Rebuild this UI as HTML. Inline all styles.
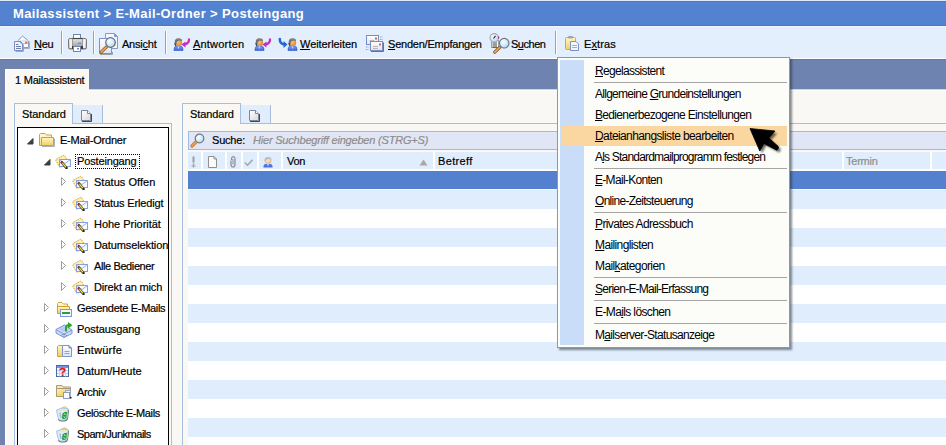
<!DOCTYPE html>
<html><head><meta charset="utf-8"><style>
*{margin:0;padding:0;box-sizing:border-box}
html,body{width:946px;height:445px;overflow:hidden;background:#F9F8F4;font-family:"Liberation Sans",sans-serif;font-size:11px;color:#000;position:relative}
.a{position:absolute}
.t{position:absolute;font-size:11px;line-height:13px;white-space:nowrap;-webkit-text-stroke:0.2px currentColor}
u{text-decoration:underline;text-underline-offset:1px;text-decoration-thickness:1px}
.sep{position:absolute;top:31px;width:2px;height:23px;border-left:1px solid #9EA3AA;border-right:1px solid #FFFFFF}
.ptab{position:absolute;background:#F9F8F4;border:1px solid #A7BEDF;border-bottom:none}
.dtab{position:absolute;background:#E1EDFC;border-right:1px solid #A7BEDF}
.bl{position:absolute;background:#A7BEDF}
.row{position:absolute;left:188px;width:758px;height:19px}
.hs{position:absolute;top:152px;width:2px;height:17px;background:#FFFFFF}
.mi{position:absolute;left:38px;font-size:11px;line-height:13px;white-space:nowrap;letter-spacing:-0.25px}
</style></head><body>
<svg width="0" height="0" style="position:absolute"><defs>
<linearGradient id="gy" x1="0" y1="0" x2="0" y2="1"><stop offset="0" stop-color="#FFF6C4"/><stop offset="1" stop-color="#F2CF5E"/></linearGradient>
<linearGradient id="gy2" x1="0" y1="0" x2="0" y2="1"><stop offset="0" stop-color="#FFF9D8"/><stop offset="1" stop-color="#F8E08A"/></linearGradient>
<linearGradient id="gb" x1="0" y1="0" x2="0" y2="1"><stop offset="0" stop-color="#FFFFFF"/><stop offset="1" stop-color="#D9E5F8"/></linearGradient>
<linearGradient id="gdoc" x1="0" y1="0" x2="1" y2="1"><stop offset="0" stop-color="#FFFFFF"/><stop offset="1" stop-color="#D8D8DE"/></linearGradient>
<radialGradient id="glens" cx="0.4" cy="0.35" r="0.7"><stop offset="0" stop-color="#FFFFFF"/><stop offset="1" stop-color="#A9D8F5"/></radialGradient>
<radialGradient id="gface" cx="0.4" cy="0.4" r="0.7"><stop offset="0" stop-color="#F9C27A"/><stop offset="1" stop-color="#D9822B"/></radialGradient>
<radialGradient id="gface2" cx="0.4" cy="0.4" r="0.7"><stop offset="0" stop-color="#FBE6CC"/><stop offset="1" stop-color="#E2B991"/></radialGradient>
<linearGradient id="gbody" x1="0" y1="0" x2="0" y2="1"><stop offset="0" stop-color="#7FA2F2"/><stop offset="1" stop-color="#3C63D8"/></linearGradient>
<linearGradient id="gprint" x1="0" y1="0" x2="0" y2="1"><stop offset="0" stop-color="#E8E6E6"/><stop offset="0.5" stop-color="#BDB9BA"/><stop offset="1" stop-color="#8D898A"/></linearGradient>
</defs></svg>
<div class="a" style="left:0px;top:0px;width:946px;height:26px;background:#5382D1;border-bottom:1px solid #4B78C6;border-top:1px solid #DCEAFC;box-shadow:inset 0 1px 0 #4B79CA"></div>
<div class="a" style="left:13px;top:6px;font-weight:bold;font-size:13px;line-height:16px;color:#fff;letter-spacing:0.37px;white-space:nowrap">Mailassistent &gt; E-Mail-Ordner &gt; Posteingang</div>
<div class="a" style="left:0px;top:26px;width:946px;height:32px;background:#E3EFFD;border-top:1px solid #EDF6FF"></div>
<div class="a" style="left:0px;top:58px;width:946px;height:1px;background:#FFFFFF"></div>
<div class="sep" style="left:61px"></div>
<div class="sep" style="left:93px"></div>
<div class="sep" style="left:165px"></div>
<div class="sep" style="left:555px"></div>
<svg class="a" style="left:13px;top:35px" width="18" height="18" viewBox="0 0 18 18" ><path d="M4.5 6L9.6 1L15.5 6V12.5H4.5Z" fill="#F7F9FD" stroke="#8A9ACB"/><path d="M16.5 6.5V13.5H6" fill="none" stroke="#A9AFC2"/><path d="M4.5 6H15.5" stroke="#C9D2EA"/><rect x="12" y="6.5" width="2.5" height="2.5" fill="#F27A3A"/><path d="M10 8.5H12" stroke="#B7BED0"/><path d="M1.5 6.5H7.5L9.5 8.5V15.5H1.5Z" fill="#EEF2FB" stroke="#7E8EC0"/><path d="M2.5 16.5H10.5V9.5" fill="none" stroke="#A0A6BA"/><path d="M3 9.5H5.5M3 11.5H8M3 13.5H8" stroke="#6F7FB6"/><path d="M7 6.5L9 8.5" stroke="#4C9BE6" stroke-width="1.3"/></svg>
<div class="t" style="left:34px;top:38px;letter-spacing:-0.250px;"><u>N</u>eu</div>
<svg class="a" style="left:68px;top:34px" width="19" height="18" viewBox="0 0 19 18" ><rect x="5.5" y="0.5" width="7" height="5" fill="#FFFFFF" stroke="#6F86AA"/><rect x="0.5" y="4.5" width="18" height="10.5" rx="1.5" fill="url(#gprint)" stroke="#807C7D"/><rect x="1.5" y="5.5" width="3" height="8.5" fill="#F4F3F3"/><rect x="14.5" y="5.5" width="3" height="8.5" fill="#F4F3F3"/><path d="M4.5 4.5H14.5" stroke="#4A4748" stroke-width="1.2"/><path d="M4.5 5V14M14.5 5V14" stroke="#8F8B8C" stroke-width="0.8"/><rect x="10" y="8.6" width="3.2" height="1.4" fill="#4AA3F2"/><rect x="4" y="12" width="11" height="3" fill="#3E3A3B"/><rect x="5.5" y="12.5" width="7" height="5" fill="#FFFFFF" stroke="#6F86AA"/><rect x="9.3" y="14" width="1.5" height="1.5" fill="#3060D0"/></svg>
<svg class="a" style="left:99px;top:33px" width="20" height="22" viewBox="0 0 20 22" ><path d="M6.5 0.5H15.5L18.5 3.5V15.5H6.5Z" fill="#F3F6FD" stroke="#8796CB"/><path d="M15.5 0.5V3.5H18.5" fill="#5AA9EE" stroke="#8796CB"/><path d="M0.5 5.5H12.5V20.5H0.5Z" fill="url(#gb)" stroke="#7E8FC6"/><path d="M1 21.5H13.5V19" fill="none" stroke="#A0A0A0"/><path d="M2.2 19.2L7.2 14.2" stroke="#8B5A2B" stroke-width="3.2" stroke-linecap="round"/><path d="M2.2 19.2L7.2 14.2" stroke="#F2A54C" stroke-width="1.7" stroke-linecap="round"/><circle cx="11.5" cy="9.5" r="4.8" fill="url(#glens)" stroke="#656E78" stroke-width="1.2"/></svg>
<div class="t" style="left:122px;top:38px;letter-spacing:-0.217px;">Ansi<u>c</u>ht</div>
<svg class="a" style="left:173px;top:37px" width="18" height="15" viewBox="0 0 18 15" ><g transform="translate(0.5 0.5) scale(1.0)"><path d="M0.5 13V11.5Q0.5 8.5 4 8.5H6Q9.5 8.5 9.5 11.5V13Z" fill="url(#gbody)" stroke="#2F55C8" stroke-width="0.6"/><path d="M4 8.8L5 12L6 8.8" fill="#BFD6FF"/><circle cx="5.2" cy="5.2" r="3.5" fill="url(#gface)"/><path d="M1.2 5.5Q0.8 0.8 5 0.8Q8.6 0.8 8.6 3.6Q7.2 2.6 4.6 3.2Q3 3.8 2.8 6.8Z" fill="#707070"/><path d="M1.4 5.5Q1.4 7.4 2.6 8.2" fill="none" stroke="#2E2E2E" stroke-width="1.1"/><path d="M3 1.6Q5 0.9 7 1.6" fill="none" stroke="#A8A8A8" stroke-width="0.8"/></g><path d="M16 1.5Q16.5 6.5 11.5 7.5" fill="none" stroke="#C52BC0" stroke-width="2.2"/><path d="M8.5 7.5L12.5 4.5V10.5Z" fill="#C52BC0"/></svg>
<div class="t" style="left:193px;top:38px;letter-spacing:0.200px;"><u>A</u>ntworten</div>
<svg class="a" style="left:254px;top:37px" width="18" height="15" viewBox="0 0 18 15" ><g transform="translate(0.5 0.5) scale(1.0)"><path d="M0.5 13V11.5Q0.5 8.5 4 8.5H6Q9.5 8.5 9.5 11.5V13Z" fill="url(#gbody)" stroke="#2F55C8" stroke-width="0.6"/><path d="M4 8.8L5 12L6 8.8" fill="#BFD6FF"/><circle cx="5.2" cy="5.2" r="3.5" fill="url(#gface)"/><path d="M1.2 5.5Q0.8 0.8 5 0.8Q8.6 0.8 8.6 3.6Q7.2 2.6 4.6 3.2Q3 3.8 2.8 6.8Z" fill="#707070"/><path d="M1.4 5.5Q1.4 7.4 2.6 8.2" fill="none" stroke="#2E2E2E" stroke-width="1.1"/><path d="M3 1.6Q5 0.9 7 1.6" fill="none" stroke="#A8A8A8" stroke-width="0.8"/></g><path d="M16 1.5Q16.5 6.5 11.5 7.5" fill="none" stroke="#C52BC0" stroke-width="2.2"/><path d="M8.5 7.5L12.5 4.5V10.5Z" fill="#C52BC0"/></svg>
<svg class="a" style="left:278px;top:37px" width="20" height="15" viewBox="0 0 20 15" ><path d="M2 1Q1 6 6 7.5" fill="none" stroke="#2167D6" stroke-width="2.4"/><path d="M9.5 7.5L5.5 4V11Z" fill="#2167D6"/><g transform="translate(9.5 0.5) scale(1.0)"><path d="M0.5 13V11.5Q0.5 8.5 4 8.5H6Q9.5 8.5 9.5 11.5V13Z" fill="url(#gbody)" stroke="#2F55C8" stroke-width="0.6"/><path d="M4 8.8L5 12L6 8.8" fill="#BFD6FF"/><circle cx="5.2" cy="5.2" r="3.5" fill="url(#gface)"/><path d="M1.2 5.5Q0.8 0.8 5 0.8Q8.6 0.8 8.6 3.6Q7.2 2.6 4.6 3.2Q3 3.8 2.8 6.8Z" fill="#707070"/><path d="M1.4 5.5Q1.4 7.4 2.6 8.2" fill="none" stroke="#2E2E2E" stroke-width="1.1"/><path d="M3 1.6Q5 0.9 7 1.6" fill="none" stroke="#A8A8A8" stroke-width="0.8"/></g></svg>
<div class="t" style="left:300px;top:38px;letter-spacing:-0.073px;"><u>W</u>eiterleiten</div>
<svg class="a" style="left:366px;top:35px" width="19" height="18" viewBox="0 0 19 18" ><rect x="0.5" y="0.5" width="12" height="9" fill="url(#gb)" stroke="#7B8CC4"/><rect x="9" y="2.5" width="2" height="2" fill="#D86A3A"/><path d="M3.5 5.5H8" stroke="#C4B6A8"/><path d="M14 2H17M14 4.5H17" stroke="#8A9AD0" stroke-dasharray="1.5 1"/><rect x="4.5" y="6.5" width="12" height="9" fill="url(#gb)" stroke="#7B8CC4"/><path d="M5 16.5H17.5V7.5" fill="none" stroke="#6F6F90"/><rect x="13" y="8.5" width="2" height="2" fill="#D86A3A"/><path d="M7 11.5H12M7 13.5H12" stroke="#C4B6A8"/><path d="M0 12H3M0 14.5H3" stroke="#8A9AD0" stroke-dasharray="1.5 1"/></svg>
<div class="t" style="left:388px;top:38px;letter-spacing:-0.220px;"><u>S</u>enden/Empfangen</div>
<svg class="a" style="left:489px;top:33px" width="21" height="21" viewBox="0 0 21 21" ><rect x="2.5" y="7.5" width="7" height="7" fill="#FFFFFF" stroke="#A0A0A0"/><path d="M3.5 10H8M3.5 12H8M3.5 14H8" stroke="#222" stroke-width="0.9"/><circle cx="5.2" cy="4.8" r="4.2" fill="url(#glens)" stroke="#A8A8A8" stroke-width="1.1"/><path d="M6.5 2.8L4.5 5.5" fill="none" stroke="#222" stroke-width="1.1"/><rect x="9" y="3.5" width="1.2" height="2" fill="#C0198F"/><path d="M5.8 19.2L10.5 14.5" stroke="#8B5A2B" stroke-width="3.2" stroke-linecap="round"/><path d="M5.8 19.2L10.5 14.5" stroke="#F2A54C" stroke-width="1.7" stroke-linecap="round"/><circle cx="15.2" cy="10.2" r="4.8" fill="url(#glens)" stroke="#6F7780" stroke-width="1.2"/></svg>
<div class="t" style="left:511px;top:38px;letter-spacing:-0.480px;">S<u>u</u>chen</div>
<svg class="a" style="left:565px;top:36px" width="14" height="15" viewBox="0 0 14 15" ><rect x="0.5" y="1.5" width="10" height="12" rx="1" fill="url(#gy)" stroke="#D9A82C"/><rect x="3" y="0" width="5" height="2.5" rx="1" fill="#9DA3B8"/><path d="M5.5 5.5H11L13.5 8V14.5H5.5Z" fill="#F2F6FD" stroke="#7E8EC8"/><path d="M7 9.5H12M7 11.5H12" stroke="#8FB1E6"/></svg>
<div class="t" style="left:584px;top:38px;letter-spacing:0.120px;">E<u>x</u>tras</div>
<div class="a" style="left:0px;top:59px;width:946px;height:31px;background:#6E83AF;border-top:1px solid #6378A8"></div>
<div class="a" style="left:0px;top:89px;width:5px;height:356px;background:#6E83AF"></div>
<div class="a" style="left:5px;top:89px;width:941px;height:356px;background:#F9F8F4;border-top:1px solid #C9D5E6;box-shadow:inset 1px 1px 0 #fff"></div>
<div class="a" style="left:5px;top:69px;width:84px;height:22px;background:#F9F8F4;border-top:1px solid #fff;border-left:1px solid #fff"></div>
<div class="t" style="left:15px;top:74px;letter-spacing:-0.221px;">1 Mailassistent</div>
<div class="ptab" style="left:14px;top:103px;width:59px;height:21px"></div>
<div class="dtab" style="left:73px;top:105px;width:30px;height:18px"></div>
<svg class="a" style="left:80px;top:109px" width="12" height="13" viewBox="0 0 12 13" ><path d="M1.5 1.5H7.5L10.5 4.5V11.5H1.5Z" fill="url(#gdoc)" stroke="#7F8797"/><path d="M2 12.5H11.5V5" fill="none" stroke="#3F4656" stroke-width="1"/><path d="M7.5 1.5V4.5H10.5" fill="#FFFFFF" stroke="#7F8797"/></svg>
<div class="a" style="left:73px;top:123px;width:99px;height:1px;background:#A7BEDF"></div>
<div class="a" style="left:14px;top:123px;width:1px;height:322px;background:#A7BEDF"></div>
<div class="a" style="left:171px;top:123px;width:1px;height:322px;background:#A7BEDF"></div>
<div class="t" style="left:22px;top:108px;letter-spacing:-0.100px;">Standard</div>
<div class="a" style="left:17px;top:127px;width:152px;height:330px;background:#fff;border:1px solid #000"></div>
<svg class="a" style="left:27px;top:138px" width="7" height="7" viewBox="0 0 7 7" ><path d="M6 0.5V6H0.5Z" fill="#3C3C3C" stroke="#3C3C3C" stroke-linejoin="round"/></svg>
<svg class="a" style="left:38px;top:132px" width="17" height="16" viewBox="0 0 17 16" ><path d="M1.5 13.5V2.5L2.5 1.5H7L8.5 3H13.5V13.5Z" fill="url(#gy2)" stroke="#CFA13A"/><path d="M4 14.5H16.5V6.5" fill="none" stroke="#A9B0BE" stroke-width="1"/><path d="M3.5 5.5H15.5V13.5H3.5Z" fill="url(#gy)" stroke="#CFA13A"/></svg>
<div class="t" style="left:60px;top:134px;letter-spacing:-0.225px;">E-Mail-Ordner</div>
<svg class="a" style="left:44px;top:159px" width="7" height="7" viewBox="0 0 7 7" ><path d="M6 0.5V6H0.5Z" fill="#3C3C3C" stroke="#3C3C3C" stroke-linejoin="round"/></svg>
<svg class="a" style="left:54px;top:152px" width="18" height="17" viewBox="0 0 18 17" ><g transform="rotate(-30 8.5 9)"><rect x="3" y="4.5" width="10" height="9" rx="1" fill="#FCF0B8" stroke="#DDAE4A" stroke-dasharray="1.6 0.8"/></g><rect x="5.5" y="7.5" width="11" height="7" fill="#F7FAFF" stroke="#86A0DA"/><path d="M5.5 7.5L11 11.5L16.5 7.5" fill="none" stroke="#9FB3E2"/><path d="M7.8 10.5L12.5 16" stroke="#262626" stroke-width="2.6" stroke-linecap="round"/><path d="M7.8 10.5L12 15.2" stroke="#F2DA2C" stroke-width="1.3"/><path d="M7.4 10L8.4 11.2" stroke="#C8282A" stroke-width="1.6"/></svg>
<div class="a" style="left:75px;top:154px;width:65px;height:15px;border:1px dotted #000"></div>
<div class="t" style="left:77px;top:155px;letter-spacing:-0.150px;">Posteingang</div>
<svg class="a" style="left:61px;top:177px" width="6" height="9" viewBox="0 0 6 9" ><path d="M0.5 0.5L4.5 4.5L0.5 8.5Z" fill="#FFFFFF" stroke="#9E9E9E"/></svg>
<svg class="a" style="left:71px;top:173px" width="18" height="17" viewBox="0 0 18 17" ><g transform="rotate(-30 8.5 9)"><rect x="3" y="4.5" width="10" height="9" rx="1" fill="#FCF0B8" stroke="#DDAE4A" stroke-dasharray="1.6 0.8"/></g><rect x="5.5" y="7.5" width="11" height="7" fill="#F7FAFF" stroke="#86A0DA"/><path d="M5.5 7.5L11 11.5L16.5 7.5" fill="none" stroke="#9FB3E2"/><path d="M7.8 10.5L12.5 16" stroke="#262626" stroke-width="2.6" stroke-linecap="round"/><path d="M7.8 10.5L12 15.2" stroke="#F2DA2C" stroke-width="1.3"/><path d="M7.4 10L8.4 11.2" stroke="#C8282A" stroke-width="1.6"/></svg>
<div class="t" style="left:94px;top:176px;letter-spacing:0.027px;">Status Offen</div>
<svg class="a" style="left:61px;top:198px" width="6" height="9" viewBox="0 0 6 9" ><path d="M0.5 0.5L4.5 4.5L0.5 8.5Z" fill="#FFFFFF" stroke="#9E9E9E"/></svg>
<svg class="a" style="left:71px;top:194px" width="18" height="17" viewBox="0 0 18 17" ><g transform="rotate(-30 8.5 9)"><rect x="3" y="4.5" width="10" height="9" rx="1" fill="#FCF0B8" stroke="#DDAE4A" stroke-dasharray="1.6 0.8"/></g><rect x="5.5" y="7.5" width="11" height="7" fill="#F7FAFF" stroke="#86A0DA"/><path d="M5.5 7.5L11 11.5L16.5 7.5" fill="none" stroke="#9FB3E2"/><path d="M7.8 10.5L12.5 16" stroke="#262626" stroke-width="2.6" stroke-linecap="round"/><path d="M7.8 10.5L12 15.2" stroke="#F2DA2C" stroke-width="1.3"/><path d="M7.4 10L8.4 11.2" stroke="#C8282A" stroke-width="1.6"/></svg>
<div class="t" style="left:94px;top:197px;letter-spacing:-0.143px;">Status Erledigt</div>
<svg class="a" style="left:61px;top:219px" width="6" height="9" viewBox="0 0 6 9" ><path d="M0.5 0.5L4.5 4.5L0.5 8.5Z" fill="#FFFFFF" stroke="#9E9E9E"/></svg>
<svg class="a" style="left:71px;top:215px" width="18" height="17" viewBox="0 0 18 17" ><g transform="rotate(-30 8.5 9)"><rect x="3" y="4.5" width="10" height="9" rx="1" fill="#FCF0B8" stroke="#DDAE4A" stroke-dasharray="1.6 0.8"/></g><rect x="5.5" y="7.5" width="11" height="7" fill="#F7FAFF" stroke="#86A0DA"/><path d="M5.5 7.5L11 11.5L16.5 7.5" fill="none" stroke="#9FB3E2"/><path d="M7.8 10.5L12.5 16" stroke="#262626" stroke-width="2.6" stroke-linecap="round"/><path d="M7.8 10.5L12 15.2" stroke="#F2DA2C" stroke-width="1.3"/><path d="M7.4 10L8.4 11.2" stroke="#C8282A" stroke-width="1.6"/></svg>
<div class="t" style="left:94px;top:218px;letter-spacing:-0.031px;">Hohe Priorität</div>
<svg class="a" style="left:61px;top:240px" width="6" height="9" viewBox="0 0 6 9" ><path d="M0.5 0.5L4.5 4.5L0.5 8.5Z" fill="#FFFFFF" stroke="#9E9E9E"/></svg>
<svg class="a" style="left:71px;top:236px" width="18" height="17" viewBox="0 0 18 17" ><g transform="rotate(-30 8.5 9)"><rect x="3" y="4.5" width="10" height="9" rx="1" fill="#FCF0B8" stroke="#DDAE4A" stroke-dasharray="1.6 0.8"/></g><rect x="5.5" y="7.5" width="11" height="7" fill="#F7FAFF" stroke="#86A0DA"/><path d="M5.5 7.5L11 11.5L16.5 7.5" fill="none" stroke="#9FB3E2"/><path d="M7.8 10.5L12.5 16" stroke="#262626" stroke-width="2.6" stroke-linecap="round"/><path d="M7.8 10.5L12 15.2" stroke="#F2DA2C" stroke-width="1.3"/><path d="M7.4 10L8.4 11.2" stroke="#C8282A" stroke-width="1.6"/></svg>
<div class="t" style="left:94px;top:239px;letter-spacing:-0.115px;">Datumselektion</div>
<svg class="a" style="left:61px;top:261px" width="6" height="9" viewBox="0 0 6 9" ><path d="M0.5 0.5L4.5 4.5L0.5 8.5Z" fill="#FFFFFF" stroke="#9E9E9E"/></svg>
<svg class="a" style="left:71px;top:257px" width="18" height="17" viewBox="0 0 18 17" ><g transform="rotate(-30 8.5 9)"><rect x="3" y="4.5" width="10" height="9" rx="1" fill="#FCF0B8" stroke="#DDAE4A" stroke-dasharray="1.6 0.8"/></g><rect x="5.5" y="7.5" width="11" height="7" fill="#F7FAFF" stroke="#86A0DA"/><path d="M5.5 7.5L11 11.5L16.5 7.5" fill="none" stroke="#9FB3E2"/><path d="M7.8 10.5L12.5 16" stroke="#262626" stroke-width="2.6" stroke-linecap="round"/><path d="M7.8 10.5L12 15.2" stroke="#F2DA2C" stroke-width="1.3"/><path d="M7.4 10L8.4 11.2" stroke="#C8282A" stroke-width="1.6"/></svg>
<div class="t" style="left:94px;top:260px;letter-spacing:-0.392px;">Alle Bediener</div>
<svg class="a" style="left:61px;top:282px" width="6" height="9" viewBox="0 0 6 9" ><path d="M0.5 0.5L4.5 4.5L0.5 8.5Z" fill="#FFFFFF" stroke="#9E9E9E"/></svg>
<svg class="a" style="left:71px;top:278px" width="18" height="17" viewBox="0 0 18 17" ><g transform="rotate(-30 8.5 9)"><rect x="3" y="4.5" width="10" height="9" rx="1" fill="#FCF0B8" stroke="#DDAE4A" stroke-dasharray="1.6 0.8"/></g><rect x="5.5" y="7.5" width="11" height="7" fill="#F7FAFF" stroke="#86A0DA"/><path d="M5.5 7.5L11 11.5L16.5 7.5" fill="none" stroke="#9FB3E2"/><path d="M7.8 10.5L12.5 16" stroke="#262626" stroke-width="2.6" stroke-linecap="round"/><path d="M7.8 10.5L12 15.2" stroke="#F2DA2C" stroke-width="1.3"/><path d="M7.4 10L8.4 11.2" stroke="#C8282A" stroke-width="1.6"/></svg>
<div class="t" style="left:94px;top:281px;letter-spacing:-0.154px;">Direkt an mich</div>
<svg class="a" style="left:44px;top:303px" width="6" height="9" viewBox="0 0 6 9" ><path d="M0.5 0.5L4.5 4.5L0.5 8.5Z" fill="#FFFFFF" stroke="#9E9E9E"/></svg>
<svg class="a" style="left:55px;top:301px" width="18" height="17" viewBox="0 0 18 17" ><path d="M2.5 12.5V2.5L3.5 1.5H7L8.5 3H12.5V12.5Z" fill="url(#gy2)" stroke="#CFA13A"/><path d="M2.5 12.5V5.5H14.5V12.5Z" fill="url(#gy)" stroke="#CFA13A"/><rect x="5.5" y="8.5" width="11" height="7" fill="#F4F7FD" stroke="#7D96D6"/><rect x="7" y="11" width="8" height="2" fill="#2F9B3A"/></svg>
<div class="t" style="left:77px;top:302px;letter-spacing:-0.312px;">Gesendete E-Mails</div>
<svg class="a" style="left:44px;top:324px" width="6" height="9" viewBox="0 0 6 9" ><path d="M0.5 0.5L4.5 4.5L0.5 8.5Z" fill="#FFFFFF" stroke="#9E9E9E"/></svg>
<svg class="a" style="left:55px;top:321px" width="18" height="18" viewBox="0 0 18 18" ><path d="M1 8.5L9.5 4L17 9V12.5L9 16.5L1 12Z" fill="#C9DCFA" stroke="#7A90D8"/><path d="M1 8.5L9 13L17 9" fill="#E6F0FE" stroke="#7A90D8"/><path d="M3.5 8.5L9.5 5.5L14.5 9L9 11.5Z" fill="#B5CCF4"/><path d="M9 13V16.5M6 14.5L9 13L12 14.8" stroke="#7A90D8" fill="#FFFFFF"/><path d="M11 10.5V6.5Q11 4.2 13.5 4.2" fill="none" stroke="#2BA52F" stroke-width="1.9"/><path d="M13 1L17.5 4.2L13 7.4Z" fill="#2BA52F"/></svg>
<div class="t" style="left:77px;top:323px;letter-spacing:-0.080px;">Postausgang</div>
<svg class="a" style="left:44px;top:345px" width="6" height="9" viewBox="0 0 6 9" ><path d="M0.5 0.5L4.5 4.5L0.5 8.5Z" fill="#FFFFFF" stroke="#9E9E9E"/></svg>
<svg class="a" style="left:55px;top:343px" width="18" height="16" viewBox="0 0 18 16" ><path d="M2.5 13.5V3.5L3.5 2.5H7.5V13.5Z" fill="url(#gy)" stroke="#CFA13A"/><path d="M7.5 2.5H14L16.5 5V13.5H7.5Z" fill="url(#gb)" stroke="#8094C8"/><path d="M14 2.5V5H16.5" fill="#4FA3E8" stroke="#8094C8"/><path d="M9.5 8.5H14.5M9.5 10.5H14.5" stroke="#9AA3B5"/></svg>
<div class="t" style="left:77px;top:344px;letter-spacing:0.200px;">Entwürfe</div>
<svg class="a" style="left:44px;top:366px" width="6" height="9" viewBox="0 0 6 9" ><path d="M0.5 0.5L4.5 4.5L0.5 8.5Z" fill="#FFFFFF" stroke="#9E9E9E"/></svg>
<svg class="a" style="left:55px;top:364px" width="15" height="14" viewBox="0 0 15 14" ><rect x="1.5" y="1.5" width="12" height="11" fill="#F2F6FD" stroke="#4A6AA5"/><rect x="2" y="2" width="11" height="2" fill="#6C98E6"/><path d="M2 6.5H13M2 9.5H13M4.5 4V12.5M10.5 4V12.5" stroke="#C3D3EE"/><path d="M5.3 6.3Q5.3 4.6 7.5 4.6Q9.7 4.6 9.7 6.2Q9.7 7.6 7.6 8.3V9.6" fill="none" stroke="#E41B1B" stroke-width="1.7"/><rect x="6.7" y="10.3" width="1.8" height="1.7" fill="#E41B1B"/></svg>
<div class="t" style="left:77px;top:365px;letter-spacing:-0.020px;">Datum/Heute</div>
<svg class="a" style="left:44px;top:387px" width="6" height="9" viewBox="0 0 6 9" ><path d="M0.5 0.5L4.5 4.5L0.5 8.5Z" fill="#FFFFFF" stroke="#9E9E9E"/></svg>
<svg class="a" style="left:55px;top:384px" width="17" height="16" viewBox="0 0 17 16" ><linearGradient id="gar" x1="0" y1="0" x2="1" y2="1"><stop offset="0" stop-color="#FFF4C0"/><stop offset="1" stop-color="#EEB83A"/></linearGradient><path d="M1.5 12.5V1.5H7L8 3H15.5V12.5Z" fill="#FBE9A8" stroke="#A99A72"/><path d="M1.5 12.5V4.5H15.5V12.5Z" fill="url(#gar)" stroke="#A99A72"/><rect x="10.5" y="6.5" width="5" height="6" fill="#EEF2FA" stroke="#9CA8C2"/><rect x="8.5" y="8.5" width="6" height="6" fill="#F8FAFE" stroke="#8E9AB8"/><rect x="15" y="13" width="1.5" height="1.5" fill="#1A1A1A"/></svg>
<div class="t" style="left:77px;top:386px;letter-spacing:-0.320px;">Archiv</div>
<svg class="a" style="left:44px;top:408px" width="6" height="9" viewBox="0 0 6 9" ><path d="M0.5 0.5L4.5 4.5L0.5 8.5Z" fill="#FFFFFF" stroke="#9E9E9E"/></svg>
<svg class="a" style="left:55px;top:405px" width="15" height="17" viewBox="0 0 15 17" ><path d="M6 3.5L9.5 1.5L12 3" fill="#F6DE9A" stroke="#E8C46A" stroke-width="1"/><path d="M13.5 4.5L12.5 13.5Q12 15.5 9.5 15.8L6 15.8Q4 15.5 3.5 14" fill="none" stroke="#6E6E6E" stroke-width="1.2"/><path d="M1.5 5Q7 2 13 3.5L12 13Q11.5 15 9 15L5.5 15Q3.5 14.5 3 12.5Z" fill="#DDEFFC" stroke="#9CC6EC"/><path d="M3 6Q7 4.5 12 5" fill="none" stroke="#F3E3A8" stroke-width="1.2"/><path d="M5 7.5L6 13" stroke="#B8AEE6" stroke-width="1.5"/><path d="M7.5 8.5Q10 6 12 7L11.3 13Q9 14.5 7 13.5Z" fill="#14A22B"/><path d="M8.8 9.5Q9.8 8.6 10.6 9.3M8.6 11.8Q9.5 12.6 10.4 11.9" fill="none" stroke="#FFFFFF" stroke-width="1"/></svg>
<div class="t" style="left:77px;top:407px;letter-spacing:-0.375px;">Gelöschte E-Mails</div>
<svg class="a" style="left:44px;top:429px" width="6" height="9" viewBox="0 0 6 9" ><path d="M0.5 0.5L4.5 4.5L0.5 8.5Z" fill="#FFFFFF" stroke="#9E9E9E"/></svg>
<svg class="a" style="left:55px;top:426px" width="15" height="17" viewBox="0 0 15 17" ><path d="M6 3.5L9.5 1.5L12 3" fill="#F6DE9A" stroke="#E8C46A" stroke-width="1"/><path d="M13.5 4.5L12.5 13.5Q12 15.5 9.5 15.8L6 15.8Q4 15.5 3.5 14" fill="none" stroke="#6E6E6E" stroke-width="1.2"/><path d="M1.5 5Q7 2 13 3.5L12 13Q11.5 15 9 15L5.5 15Q3.5 14.5 3 12.5Z" fill="#DDEFFC" stroke="#9CC6EC"/><path d="M3 6Q7 4.5 12 5" fill="none" stroke="#F3E3A8" stroke-width="1.2"/><path d="M5 7.5L6 13" stroke="#B8AEE6" stroke-width="1.5"/><path d="M7.5 8.5Q10 6 12 7L11.3 13Q9 14.5 7 13.5Z" fill="#14A22B"/><path d="M8.8 9.5Q9.8 8.6 10.6 9.3M8.6 11.8Q9.5 12.6 10.4 11.9" fill="none" stroke="#FFFFFF" stroke-width="1"/></svg>
<div class="t" style="left:77px;top:428px;letter-spacing:-0.492px;">Spam/Junkmails</div>
<div class="ptab" style="left:182px;top:103px;width:59px;height:21px"></div>
<div class="dtab" style="left:241px;top:105px;width:30px;height:18px"></div>
<svg class="a" style="left:248px;top:109px" width="12" height="13" viewBox="0 0 12 13" ><path d="M1.5 1.5H7.5L10.5 4.5V11.5H1.5Z" fill="url(#gdoc)" stroke="#7F8797"/><path d="M2 12.5H11.5V5" fill="none" stroke="#3F4656" stroke-width="1"/><path d="M7.5 1.5V4.5H10.5" fill="#FFFFFF" stroke="#7F8797"/></svg>
<div class="a" style="left:241px;top:123px;width:705px;height:1px;background:#A7BEDF"></div>
<div class="a" style="left:182px;top:123px;width:1px;height:322px;background:#A7BEDF"></div>
<div class="t" style="left:190px;top:108px;letter-spacing:-0.100px;">Standard</div>
<div class="a" style="left:188px;top:131px;width:758px;height:19px;background:#E0E6F6;border:1px solid #9DBAE6;border-right:none"></div>
<svg class="a" style="left:190px;top:133px" width="15" height="15" viewBox="0 0 15 15" ><path d="M2 13L6.5 8.5" stroke="#C9782A" stroke-width="3.2" stroke-linecap="round"/><path d="M2 13L6.5 8.5" stroke="#F4A64E" stroke-width="1.6" stroke-linecap="round"/><circle cx="9.5" cy="5.5" r="4.3" fill="url(#glens)" stroke="#6E7A86" stroke-width="1.2"/></svg>
<div class="t" style="left:212px;top:134px;letter-spacing:-0.200px;">Suche:</div>
<div class="t" style="left:253px;top:134px;letter-spacing:-0.200px;color:#8F8C8A;font-style:italic">Hier Suchbegriff eingeben (STRG+S)</div>
<div class="a" style="left:188px;top:152px;width:758px;height:17px;background:#E0EDFC"></div>
<div class="a" style="left:188px;top:169px;width:758px;height:2px;background:#FFFFFF"></div>
<div class="hs" style="left:201px"></div>
<div class="hs" style="left:225px"></div>
<div class="hs" style="left:241px"></div>
<div class="hs" style="left:257px"></div>
<div class="hs" style="left:281px"></div>
<div class="hs" style="left:433px"></div>
<div class="hs" style="left:842px"></div>
<div class="hs" style="left:930px"></div>
<svg class="a" style="left:191px;top:156px" width="5" height="12" viewBox="0 0 5 12" ><path d="M2.5 0.5V6.5" stroke="#9D9D9D" stroke-width="2"/><rect x="1.5" y="7.5" width="2" height="1" fill="#9D9D9D"/><path d="M0.5 10H4.5M2.5 8.5V11.5" stroke="#9D9D9D"/></svg>
<svg class="a" style="left:208px;top:156px" width="9" height="12" viewBox="0 0 9 12" ><path d="M0.5 0.5H6L8.5 3V11.5H0.5Z" fill="#FBFBFB" stroke="#8F8F8F"/><path d="M6 0.5V3H8.5" fill="none" stroke="#8F8F8F"/></svg>
<svg class="a" style="left:230px;top:156px" width="6" height="12" viewBox="0 0 6 12" ><path d="M1 4.5V8.5Q1 11 3 11Q5 11 5 8.5V2.5Q5 0.6 3.2 0.6Q1.6 0.6 1.6 2.5V4" fill="none" stroke="#8A8A8A" stroke-width="1.2"/><path d="M3 3V8.5" stroke="#8A8A8A" stroke-width="1"/></svg>
<svg class="a" style="left:244px;top:159px" width="9" height="7" viewBox="0 0 9 7" ><path d="M0.8 3.5L3.5 6.2L8.5 0.8" fill="none" stroke="#A6A6A6" stroke-width="1.6"/></svg>
<svg class="a" style="left:263px;top:156px" width="10" height="12" viewBox="0 0 10 12" ><path d="M0.5 11.5V10Q0.5 8 3 8H7Q9.5 8 9.5 10V11.5Z" fill="#4C74E0"/><path d="M4 8L5 10.5L6 8" fill="#C7D8FF"/><circle cx="5" cy="4.8" r="3.5" fill="url(#gface2)"/><path d="M1.5 4.8Q1.2 1 5 1Q8.6 1 8.5 4Q7 2.5 5 3Q3 3.5 2.5 6Z" fill="#BEBEBE"/></svg>
<div class="t" style="left:287px;top:155px;letter-spacing:-0.350px;">Von</div>
<svg class="a" style="left:419px;top:159px" width="9" height="7" viewBox="0 0 9 7" ><path d="M4.5 0.5L8.5 6.5H0.5Z" fill="#ADA89C"/></svg>
<div class="t" style="left:438px;top:155px;letter-spacing:0.350px;">Betreff</div>
<div class="t" style="left:846px;top:155px;letter-spacing:-0.240px;color:#8E8E8E">Termin</div>
<div class="a" style="left:188px;top:171px;width:758px;height:18px;background:#5380CF"></div>
<div class="row" style="top:190px;background:#E0EDFC"></div>
<div class="row" style="top:209px;background:#FFFFFF"></div>
<div class="row" style="top:228px;background:#E0EDFC"></div>
<div class="row" style="top:247px;background:#FFFFFF"></div>
<div class="row" style="top:266px;background:#E0EDFC"></div>
<div class="row" style="top:285px;background:#FFFFFF"></div>
<div class="row" style="top:304px;background:#E0EDFC"></div>
<div class="row" style="top:323px;background:#FFFFFF"></div>
<div class="row" style="top:342px;background:#E0EDFC"></div>
<div class="row" style="top:361px;background:#FFFFFF"></div>
<div class="row" style="top:380px;background:#E0EDFC"></div>
<div class="row" style="top:399px;background:#FFFFFF"></div>
<div class="row" style="top:418px;background:#E0EDFC"></div>
<div class="row" style="top:437px;background:#FFFFFF"></div>
<div class="a" style="left:557px;top:57px;width:233px;height:291px;background:#FCFCF9;border:1px solid #979797;box-shadow:2px 2px 2px 0px rgba(40,50,60,0.55)"></div>
<div class="a" style="left:560px;top:60px;width:24px;height:285px;background:#C9DDF9"></div>
<div class="t" style="left:595px;top:65px;letter-spacing:-0.677px;font-size:12px;-webkit-text-stroke:0;"><u>R</u>egelassistent</div>
<div class="a" style="left:594px;top:82px;width:193px;height:1px;background:#A6A6A6"></div>
<div class="t" style="left:595px;top:88px;letter-spacing:-0.725px;font-size:12px;-webkit-text-stroke:0;">Allgemeine <u>G</u>rundeinstellungen</div>
<div class="t" style="left:595px;top:109px;letter-spacing:-0.666px;font-size:12px;-webkit-text-stroke:0;"><u>B</u>edienerbezogene Einstellungen</div>
<div class="a" style="left:561px;top:126px;width:226px;height:20px;background:#FAD7A0"></div>
<div class="t" style="left:595px;top:130px;letter-spacing:-0.600px;font-size:12px;-webkit-text-stroke:0;"><u>D</u>ateianhangsliste bearbeiten</div>
<div class="t" style="left:595px;top:151px;letter-spacing:-0.803px;font-size:12px;-webkit-text-stroke:0;">A<u>l</u>s Standardmailprogramm festlegen</div>
<div class="a" style="left:594px;top:168px;width:193px;height:1px;background:#A6A6A6"></div>
<div class="t" style="left:595px;top:174px;letter-spacing:-0.692px;font-size:12px;-webkit-text-stroke:0;"><u>E</u>-Mail-Konten</div>
<div class="t" style="left:595px;top:195px;letter-spacing:-0.716px;font-size:12px;-webkit-text-stroke:0;"><u>O</u>nline-Zeitsteuerung</div>
<div class="a" style="left:594px;top:212px;width:193px;height:1px;background:#A6A6A6"></div>
<div class="t" style="left:595px;top:218px;letter-spacing:-0.611px;font-size:12px;-webkit-text-stroke:0;"><u>P</u>rivates Adressbuch</div>
<div class="t" style="left:595px;top:239px;letter-spacing:-0.617px;font-size:12px;-webkit-text-stroke:0;"><u>M</u>ailinglisten</div>
<div class="t" style="left:595px;top:260px;letter-spacing:-0.608px;font-size:12px;-webkit-text-stroke:0;">Mail<u>k</u>ategorien</div>
<div class="a" style="left:594px;top:277px;width:193px;height:1px;background:#A6A6A6"></div>
<div class="t" style="left:595px;top:283px;letter-spacing:-0.759px;font-size:12px;-webkit-text-stroke:0;"><u>S</u>erien-E-Mail-Erfassung</div>
<div class="a" style="left:594px;top:300px;width:193px;height:1px;background:#A6A6A6"></div>
<div class="t" style="left:595px;top:306px;letter-spacing:-0.621px;font-size:12px;-webkit-text-stroke:0;">E-Ma<u>i</u>ls löschen</div>
<div class="a" style="left:594px;top:323px;width:193px;height:1px;background:#A6A6A6"></div>
<div class="t" style="left:595px;top:329px;letter-spacing:-0.670px;font-size:12px;-webkit-text-stroke:0;">M<u>a</u>ilserver-Statusanzeige</div>
<svg class="a" style="left:740px;top:118px" width="46" height="40" viewBox="0 0 46 40" ><filter id="fs" x="-30%" y="-30%" width="160%" height="160%"><feGaussianBlur stdDeviation="1.3"/></filter><g transform="translate(2.2 2.2)" filter="url(#fs)" opacity="0.6"><path d="M10 10.5L35 13L28.8 20L38.3 28.6Q39 30.5 36.8 32.2L23.9 25.4L19.8 33Z" fill="#000"/></g><path d="M10 10.5L35 13L28.8 20L38.3 28.6Q39 30.5 36.8 32.2L23.9 25.4L19.8 33Z" fill="#000" stroke="#000" stroke-width="0.8" stroke-linejoin="round"/></svg>
</body></html>
